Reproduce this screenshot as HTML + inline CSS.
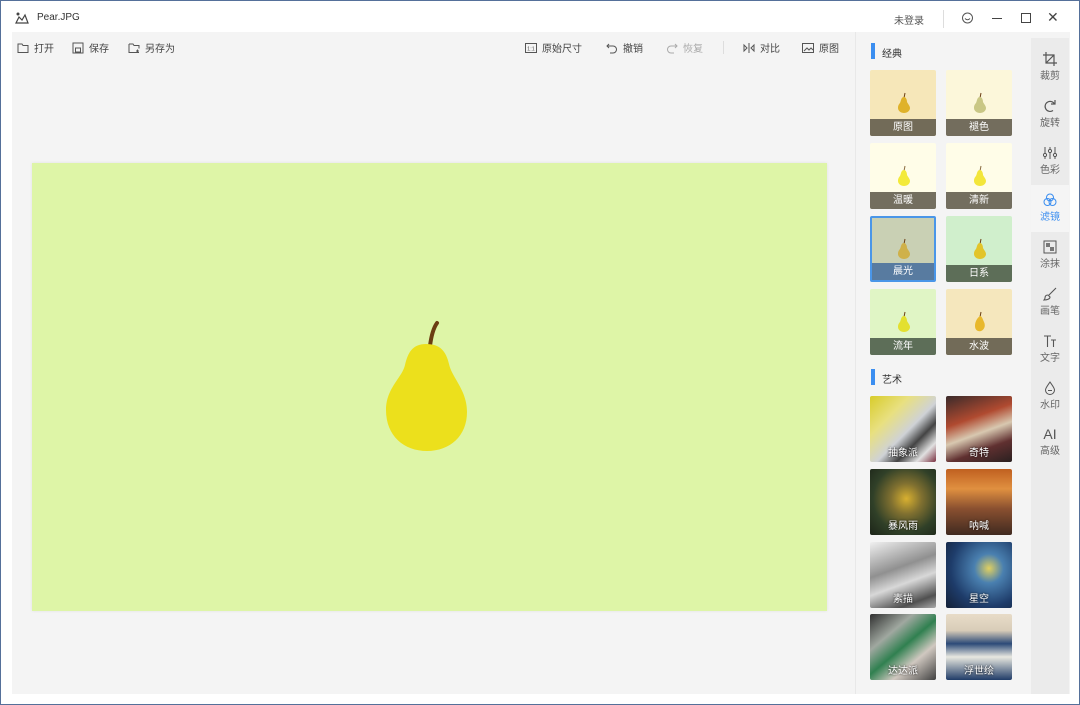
<!DOCTYPE html>
<html><head><meta charset="utf-8"><style>
*{margin:0;padding:0;box-sizing:border-box}
body{width:1080px;height:705px;background:#fff;position:relative;overflow:hidden;font-family:"Liberation Sans","Noto Sans CJK SC",sans-serif;font-size:10px;color:#333}
.a{position:absolute}
.win{left:0;top:0;width:1080px;height:705px;border:1px solid #55709a}
.panel{left:12px;top:32px;width:1058px;height:662px;background:#f4f4f4}
.tb{top:40px;font-size:10px;color:#444;display:flex;align-items:center;gap:5px}
.tb svg{width:12px;height:12px}
.th{width:66px;height:66px;border-radius:2px;overflow:hidden}
.th .lb{position:absolute;left:0;bottom:0;width:100%;height:17px;background:rgba(90,85,70,.85);color:#fff;text-align:center;font-size:10px;line-height:17px}
.side .it{position:absolute;left:0;width:38px;text-align:center;font-size:10px;color:#666}
.side svg{display:block;margin:0 auto 1px;width:14px;height:14px}
</style></head><body>
<div class="a win"></div>
<div class="a panel"></div>
<svg class="a" style="left:15px;top:12px" width="14" height="12" viewBox="0 0 14 12"><circle cx="3" cy="2" r="1.5" fill="#444"/><path d="M1 11 L4 5 L7 8 L10 3 L13 11 Z" fill="none" stroke="#444" stroke-width="1.2"/></svg>
<div class="a" style="left:37px;top:12px;font-size:10px;color:#333">Pear.JPG</div>
<div class="a" style="left:894px;top:12px;font-size:10px;color:#555">未登录</div>
<div class="a" style="left:943px;top:10px;width:1px;height:18px;background:#ddd"></div>
<svg class="a" style="left:961px;top:12px" width="13" height="13" viewBox="0 0 13 13"><circle cx="6.5" cy="6" r="5" fill="none" stroke="#555"/><path d="M4 6.5 Q6.5 9 9 6.5" fill="none" stroke="#555"/></svg>
<div class="a" style="left:992px;top:18px;width:10px;height:1px;background:#444"></div>
<div class="a" style="left:1021px;top:13px;width:10px;height:10px;border:1px solid #444"></div>
<div class="a" style="left:1047px;top:9px;font-size:14px;color:#444">✕</div>
<div class="a tb" style="left:17px"><svg viewBox="0 0 12 12"><path d="M1 2h4l1 1.5h5v7H1z" fill="none" stroke="#555"/></svg>打开</div>
<div class="a tb" style="left:72px"><svg viewBox="0 0 12 12"><rect x="1" y="1" width="10" height="10" fill="none" stroke="#555"/><rect x="3.5" y="6" width="5" height="4" fill="none" stroke="#555"/></svg>保存</div>
<div class="a tb" style="left:128px"><svg viewBox="0 0 12 12"><path d="M1 2h4l1 1.5h5v3M11 10.5H1V2" fill="none" stroke="#555"/><path d="M8 9h3M9.5 7.5v3" stroke="#555"/></svg>另存为</div>
<div class="a tb" style="left:525px"><svg viewBox="0 0 12 12"><rect x=".5" y="1.5" width="11" height="9" fill="none" stroke="#555"/><text x="6" y="8.5" font-size="5.5" text-anchor="middle" fill="#555">1:1</text></svg>原始尺寸</div>
<div class="a tb" style="left:606px"><svg viewBox="0 0 12 12"><path d="M3 2L1 4l2 2M1 4h6a3.5 3.5 0 010 7H4" fill="none" stroke="#555"/></svg>撤销</div>
<div class="a tb" style="left:666px;color:#aaa"><svg viewBox="0 0 12 12"><path d="M9 2l2 2-2 2M11 4H5a3.5 3.5 0 000 7h3" fill="none" stroke="#aaa"/></svg>恢复</div>
<div class="a" style="left:723px;top:41px;width:1px;height:13px;background:#ddd"></div>
<div class="a tb" style="left:743px"><svg viewBox="0 0 12 12"><path d="M1 3v6l3-3zM11 3v6l-3-3zM6 1v10" fill="none" stroke="#555"/></svg>对比</div>
<div class="a tb" style="left:802px"><svg viewBox="0 0 12 12"><rect x=".5" y="1.5" width="11" height="9" fill="none" stroke="#555"/><path d="M2 9l3-3 2 2 2-2 2 2" fill="none" stroke="#555"/></svg>原图</div>
<div class="a" style="left:32px;top:163px;width:795px;height:448px;background:#def5a7;box-shadow:0 0 3px rgba(0,0,0,.08)"></div>
<svg class="a" style="left:0;top:0" width="1080" height="705"><path d="M430 346 Q432 330 437 323" stroke="#6b3d12" stroke-width="4" fill="none" stroke-linecap="round"/><path d="M426 344 C413 344 408 352 405 365 C402 378 386 388 386 410 C386 436 404 451 427 451 C450 451 467 436 467 412 C467 390 452 378 449 364 C446 351 440 344 426 344Z" fill="#ece01c"/></svg>
<div class="a" style="left:855px;top:32px;width:1px;height:662px;background:#e8e8e8"></div>
<div class="a" style="left:871px;top:43px;width:4px;height:16px;background:#3b8ef0"></div>
<div class="a" style="left:882px;top:45px;font-size:10px">经典</div>
<div class="a" style="left:871px;top:369px;width:4px;height:16px;background:#3b8ef0"></div>
<div class="a" style="left:882px;top:371px;font-size:10px">艺术</div>
<div class="a th" style="left:870px;top:70px;background:#f6e7b9"><svg class="a" style="left:27px;top:22px" width="14" height="22" viewBox="0 0 14 22"><path d="M7 6 L8 1" stroke="#6b3d12"/><path d="M7 5C4 5 4 9 3 11C1 13 1 15 1 16C1 19 4 21 7 21C10 21 13 19 13 16C13 14 11 12 10 10C10 8 9 5 7 5Z" fill="#dfb22a"/></svg><div class="lb">原图</div></div>
<div class="a th" style="left:946px;top:70px;background:#fcf7da"><svg class="a" style="left:27px;top:22px" width="14" height="22" viewBox="0 0 14 22"><path d="M7 6 L8 1" stroke="#6b3d12"/><path d="M7 5C4 5 4 9 3 11C1 13 1 15 1 16C1 19 4 21 7 21C10 21 13 19 13 16C13 14 11 12 10 10C10 8 9 5 7 5Z" fill="#c9c785"/></svg><div class="lb">褪色</div></div>
<div class="a th" style="left:870px;top:143px;background:#fffde8"><svg class="a" style="left:27px;top:22px" width="14" height="22" viewBox="0 0 14 22"><path d="M7 6 L8 1" stroke="#8a6b40"/><path d="M7 5C4 5 4 9 3 11C1 13 1 15 1 16C1 19 4 21 7 21C10 21 13 19 13 16C13 14 11 12 10 10C10 8 9 5 7 5Z" fill="#f3ea3a"/></svg><div class="lb">温暖</div></div>
<div class="a th" style="left:946px;top:143px;background:#fffde8"><svg class="a" style="left:27px;top:22px" width="14" height="22" viewBox="0 0 14 22"><path d="M7 6 L8 1" stroke="#8a6b40"/><path d="M7 5C4 5 4 9 3 11C1 13 1 15 1 16C1 19 4 21 7 21C10 21 13 19 13 16C13 14 11 12 10 10C10 8 9 5 7 5Z" fill="#f3e63a"/></svg><div class="lb">清新</div></div>
<div class="a th" style="left:870px;top:216px;background:#c9d0b4;border:2px solid #4a96e8"><svg class="a" style="left:25px;top:20px" width="14" height="22" viewBox="0 0 14 22"><path d="M7 6 L8 1" stroke="#6b3d12"/><path d="M7 5C4 5 4 9 3 11C1 13 1 15 1 16C1 19 4 21 7 21C10 21 13 19 13 16C13 14 11 12 10 10C10 8 9 5 7 5Z" fill="#cfb14a"/></svg><div class="lb" style="background:#587ba0">晨光</div></div>
<div class="a th" style="left:946px;top:216px;background:#d0efcc"><svg class="a" style="left:27px;top:22px" width="14" height="22" viewBox="0 0 14 22"><path d="M7 6 L8 1" stroke="#6b3d12"/><path d="M7 5C4 5 4 9 3 11C1 13 1 15 1 16C1 19 4 21 7 21C10 21 13 19 13 16C13 14 11 12 10 10C10 8 9 5 7 5Z" fill="#e2c42a"/></svg><div class="lb" style="background:#5d6e58">日系</div></div>
<div class="a th" style="left:870px;top:289px;background:#e0f5c5"><svg class="a" style="left:27px;top:22px" width="14" height="22" viewBox="0 0 14 22"><path d="M7 6 L8 1" stroke="#6b3d12"/><path d="M7 5C4 5 4 9 3 11C1 13 1 15 1 16C1 19 4 21 7 21C10 21 13 19 13 16C13 14 11 12 10 10C10 8 9 5 7 5Z" fill="#e3e030"/></svg><div class="lb" style="background:#5d6e58">流年</div></div>
<div class="a th" style="left:946px;top:289px;background:#f5e7bd"><svg class="a" style="left:27px;top:22px" width="14" height="22" viewBox="0 0 14 22"><path d="M7 6 L8 1" stroke="#6b3d12"/><path d="M7 5C4 7 2 11 2 15C2 19 5 21 8 20C11 19 13 15 11 11C10 9 9 5 7 5Z" fill="#e8b82c"/></svg><div class="lb">水波</div></div>
<div class="a th" style="left:870px;top:396px;background:linear-gradient(135deg,#d8cc2a 0,#e8e080 30%,#cfd2d6 55%,#444 70%,#e0e0e0 85%,#7a3040 100%)"><div class="lb" style="background:transparent;text-shadow:0 0 2px #000">抽象派</div></div>
<div class="a th" style="left:946px;top:396px;background:linear-gradient(160deg,#3a2a2a,#b04a30 35%,#d8c8b0 55%,#603030 75%,#2a2020)"><div class="lb" style="background:transparent;text-shadow:0 0 2px #000">奇特</div></div>
<div class="a th" style="left:870px;top:469px;background:radial-gradient(circle at 55% 45%,#d8b030 0,#807030 30%,#304028 65%,#1c2418 100%)"><div class="lb" style="background:transparent;text-shadow:0 0 2px #000">暴风雨</div></div>
<div class="a th" style="left:946px;top:469px;background:linear-gradient(180deg,#c06020,#e09040 30%,#8a5030 60%,#402a20)"><div class="lb" style="background:transparent;text-shadow:0 0 2px #000">呐喊</div></div>
<div class="a th" style="left:870px;top:542px;background:linear-gradient(160deg,#f0f0f0,#909090 40%,#d8d8d8 60%,#505050 85%,#aaa)"><div class="lb" style="background:transparent;text-shadow:0 0 2px #000">素描</div></div>
<div class="a th" style="left:946px;top:542px;background:radial-gradient(circle at 65% 40%,#e0d060 0,#4a80b0 25%,#1e3c6a 65%,#142036)"><div class="lb" style="background:transparent;text-shadow:0 0 2px #000">星空</div></div>
<div class="a th" style="left:870px;top:614px;background:linear-gradient(140deg,#303030,#a0a8a0 30%,#308050 50%,#d0c8c0 70%,#404040)"><div class="lb" style="background:transparent;text-shadow:0 0 2px #000">达达派</div></div>
<div class="a th" style="left:946px;top:614px;background:linear-gradient(180deg,#e8dcc8 0,#d8ccb8 25%,#2c4a78 45%,#e8e8e0 65%,#203c68 100%)"><div class="lb" style="background:transparent;text-shadow:0 0 2px #000">浮世绘</div></div>
<div class="a side" style="left:1031px;top:38px;width:38px;height:656px;background:#ebebeb">
<div class="it" style="top:147px;height:47px;background:#f5f5f5"></div>
<div class="it" style="top:14px"><svg viewBox="0 0 14 14"><path d="M3 0v11h11M0 3h11v11M3 11L11 3" fill="none" stroke="#555" stroke-width="1.2"/></svg>裁剪</div>
<div class="it" style="top:61px"><svg viewBox="0 0 14 14"><path d="M10 11.5A5 5 0 1 1 11.5 5M12 1v4H8" fill="none" stroke="#555" stroke-width="1.2"/></svg>旋转</div>
<div class="it" style="top:108px"><svg viewBox="0 0 14 14"><path d="M2 1v12M7 1v12M12 1v12" stroke="#555"/><circle cx="2" cy="9" r="1.6" fill="#ebebeb" stroke="#555"/><circle cx="7" cy="5" r="1.6" fill="#ebebeb" stroke="#555"/><circle cx="12" cy="9" r="1.6" fill="#ebebeb" stroke="#555"/></svg>色彩</div>
<div class="it" style="top:155px;color:#3b8ef0"><svg viewBox="0 0 14 14"><circle cx="7" cy="4.5" r="3.5" fill="none" stroke="#3b8ef0"/><circle cx="4.5" cy="9" r="3.5" fill="none" stroke="#3b8ef0"/><circle cx="9.5" cy="9" r="3.5" fill="none" stroke="#3b8ef0"/></svg>滤镜</div>
<div class="it" style="top:202px"><svg viewBox="0 0 14 14"><rect x="1" y="1" width="12" height="12" fill="none" stroke="#555"/><rect x="3" y="3" width="4" height="4" fill="#777"/><rect x="7" y="7" width="4" height="4" fill="#777"/></svg>涂抹</div>
<div class="it" style="top:249px"><svg viewBox="0 0 14 14"><path d="M13 1L6 8M5 8c-2 0-3 1-3 3 0 1-1 2-1 2 3 0 6-1 6-3z" fill="none" stroke="#555" stroke-width="1.1"/></svg>画笔</div>
<div class="it" style="top:296px"><svg viewBox="0 0 14 14"><path d="M1 2h7M4.5 2v11M8 6h5M10.5 6v7" fill="none" stroke="#555" stroke-width="1.1"/></svg>文字</div>
<div class="it" style="top:343px"><svg viewBox="0 0 14 14"><path d="M7 1C5 4 2.5 7 2.5 9a4.5 4.5 0 0 0 9 0C11.5 7 9 4 7 1z" fill="none" stroke="#555"/><path d="M5 9.5h4" stroke="#555"/></svg>水印</div>
<div class="it" style="top:389px"><span style="font-size:14px;line-height:15px;display:block;color:#555">AI</span>高级</div>
</div>
</body></html>
